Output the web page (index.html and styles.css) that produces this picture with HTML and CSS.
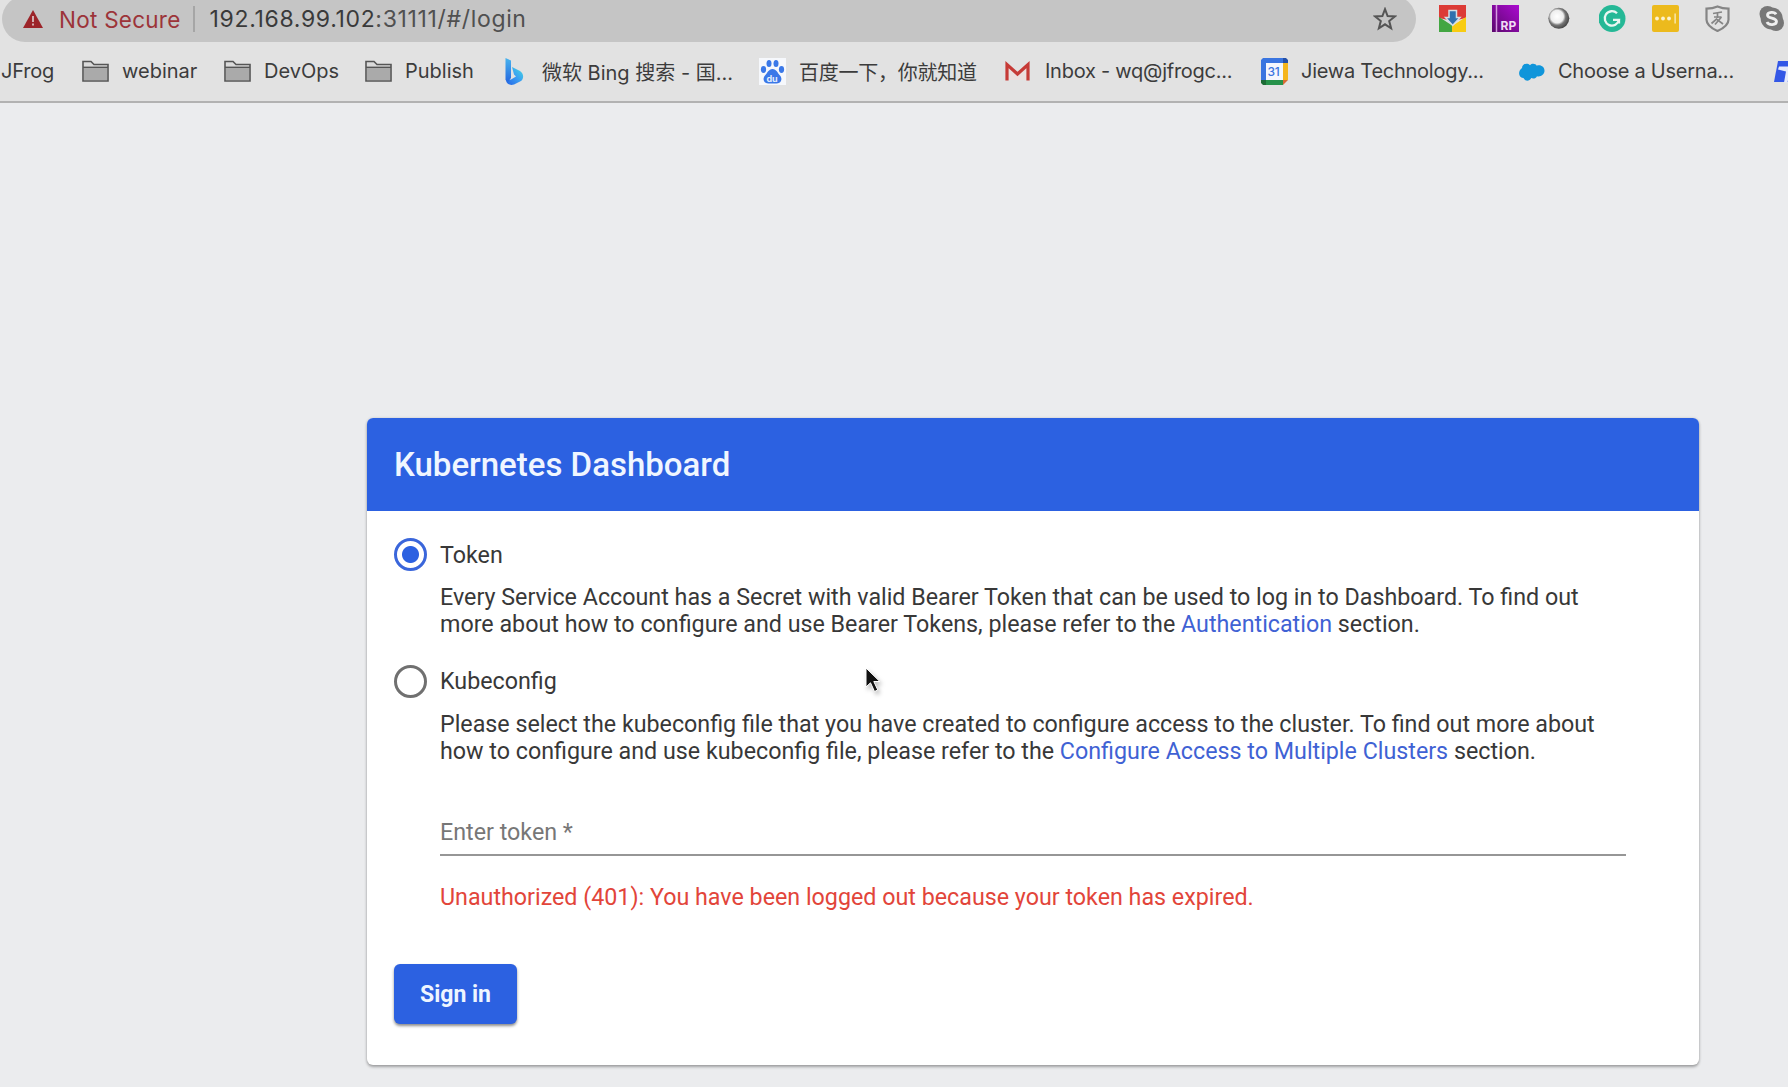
FILE: index.html
```html
<!DOCTYPE html>
<html lang="en">
<head>
<meta charset="utf-8">
<title>Kubernetes Dashboard</title>
<link rel="stylesheet" href="styles.css">
</head>
<body>
<header class="browser">
  <div class="toolbar">
    <div class="omnibox">
      <svg class="warn" viewBox="0 0 20 18"><path d="M10 0 20 18H0z" fill="#9c2429"/><path d="M10 6v6M10 13.5v2" stroke="#d9bfc0" stroke-width="1.8"/></svg>
      <span class="not-secure">Not Secure</span>
      <span class="divider"></span>
      <span class="url"><span class="host">192.168.99.102</span>:31111/#/login</span>
      <svg class="star" viewBox="0 0 24 24"><path d="M12 2.200l2.600 6.900 7.200.4-5.600 4.600 1.900 7.200L12 17.300l-6.100 4 1.900-7.200L2.200 9.500l7.200-.4z" fill="none" stroke="#555" stroke-width="2"/></svg>
    </div>
    <div class="extensions">
      <svg viewBox="0 0 27 27"><path d="M0 0h27v13L13.500 16 0 13z" fill="#dc3b36"/><path d="M0 12l14 9v6H0z" fill="#43a642"/><path d="M27 12L13 21v6h14z" fill="#f8cc12"/><path d="M10 5.500h7.500v7h3.500l-7.300 8L6.500 12.500H10z" fill="#3070ad" stroke="#d4dfe6" stroke-width="1.500"/></svg>
      <svg viewBox="0 0 27 27"><defs><linearGradient id="rp" x1="0" x2="1" y1="1" y2="0"><stop offset="0" stop-color="#5a086c"/><stop offset="1" stop-color="#ab0bd0"/></linearGradient></defs><path d="M0 0h27v27H0z" fill="url(#rp)"/><path d="M4.500 0v27" stroke="#d69be0" stroke-width="1.500"/><text x="8.500" y="24.500" class="rp" fill="#f0dcf4">RP</text></svg>
      <svg viewBox="0 0 27 27"><defs><radialGradient id="orb" cx=".42" cy=".42" r=".6"><stop offset="0" stop-color="#fff"/><stop offset=".5" stop-color="#eee"/><stop offset=".68" stop-color="#777"/><stop offset="1" stop-color="#444"/></radialGradient></defs><circle cx="12.800" cy="13.300" r="10.500" fill="url(#orb)"/></svg>
      <svg viewBox="0 0 27 27"><circle cx="13" cy="13.500" r="13.500" fill="#25b896"/><path d="M18 8.300A7.200 7.200 0 1 0 20 14.800H14M20 14.500v4" fill="none" stroke="#e9f6f2" stroke-width="2.300"/></svg>
      <svg viewBox="0 0 27 27"><rect width="27" height="27" rx="2" fill="#ecba1d"/><g fill="#fbf2d0"><circle cx="5" cy="13.500" r="1.900"/><circle cx="11" cy="13.500" r="1.900"/><circle cx="17" cy="13.500" r="1.900"/><path d="M22.500 8.500h1.200v10h-1.200z"/></g></svg>
      <svg viewBox="0 0 27 27"><path d="M12.500 1.500c4 1.800 7 2.200 11 2.200v11c0 5.500-6 9-11 11.300-5-2.300-11-5.800-11-11.300v-11c4 0 7-.4 11-2.200z" fill="none" stroke="#858585" stroke-width="2.200"/><path d="M8 8.500l9-1.500M9 12h7.500M12.500 8v5M6.500 18.500l5-4.500 6.500 5M16.500 12l-6.500 7.500" fill="none" stroke="#858585" stroke-width="1.700"/></svg>
      <svg viewBox="0 0 27 27"><circle cx="8.500" cy="9" r="8" fill="#777"/><circle cx="17" cy="18" r="8" fill="#777"/><circle cx="12.700" cy="13.500" r="11" fill="#777"/><path d="M17 9.300c-1.500-3-8.500-2.500-8.500.8 0 4 9 2.200 9 6.500 0 3.700-8 4-9.500.4" fill="none" stroke="#eee" stroke-width="2.800"/></svg>
    </div>
  </div>
  <nav class="bookmarks">
    <a class="bm first">JFrog</a>
    <a class="bm"><svg class="folder" viewBox="0 0 27 22"><path d="M1 21V1.500h8l3 3h14V21z" fill="#dadada" stroke="#555" stroke-width="1.600"/><path d="M2 8h23v12H2z" fill="#aaa"/><path d="M1 7.300h25" stroke="#555" stroke-width="1.400"/></svg><span>webinar</span></a>
    <a class="bm"><svg class="folder" viewBox="0 0 27 22"><path d="M1 21V1.500h8l3 3h14V21z" fill="#dadada" stroke="#555" stroke-width="1.600"/><path d="M2 8h23v12H2z" fill="#aaa"/><path d="M1 7.300h25" stroke="#555" stroke-width="1.400"/></svg><span>DevOps</span></a>
    <a class="bm"><svg class="folder" viewBox="0 0 27 22"><path d="M1 21V1.500h8l3 3h14V21z" fill="#dadada" stroke="#555" stroke-width="1.600"/><path d="M2 8h23v12H2z" fill="#aaa"/><path d="M1 7.300h25" stroke="#555" stroke-width="1.400"/></svg><span>Publish</span></a>
    <a class="bm"><svg class="fav" viewBox="0 0 27 27"><defs><linearGradient id="bs" x2="0" y2="1"><stop offset="0" stop-color="#48b4ee"/><stop offset="1" stop-color="#2468e0"/></linearGradient><linearGradient id="bb" x1="0" x2="1" y1="1" y2="0"><stop offset="0" stop-color="#2464e4"/><stop offset=".5" stop-color="#3a9cf2"/><stop offset="1" stop-color="#48dce0"/></linearGradient></defs><path d="M10 9l8 4c4 2.500 4 7.500 1 10L12 26.500c-5 1.500-8-1.500-8-4.500l5-.5 5-3-2-2z" fill="url(#bb)"/><path d="M3.500 0l5.500 2.500V20l-3 4-2.500-2z" fill="url(#bs)"/></svg><span>微软 Bing 搜索 - 国...</span></a>
    <a class="bm snug"><svg class="fav" viewBox="0 0 27 27"><path d="M0 0h27v27H0z" fill="#f6f8fc"/><g fill="#3a78e8"><ellipse cx="4.500" cy="11.500" rx="2.600" ry="3.400"/><ellipse cx="10" cy="5.500" rx="2.500" ry="3.600"/><ellipse cx="17" cy="5.500" rx="2.500" ry="3.600"/><ellipse cx="22.500" cy="11.500" rx="2.600" ry="3.400"/><path d="M13.500 11c4 0 5 4 7.500 6.500 3 3.500 1 8-3.500 8h-8c-4.500 0-6.500-4.500-3.500-8C8.500 15 9.500 11 13.500 11z"/></g><text x="7.500" y="23.500" class="du" fill="#e4edfd">du</text></svg><span>百度一下，你就知道</span></a>
    <a class="bm snug"><svg class="fav" viewBox="0 0 27 27"><path d="M3.500 8v14h18V8l-9 8z" fill="#ecdedd"/><path d="M2 22.500V6.500l10.500 9.500L23 6.500v16" fill="none" stroke="#c63a36" stroke-width="3.200"/></svg><span>Inbox - wq@jfrogc...</span></a>
    <a class="bm snug"><svg class="fav" viewBox="0 0 27 27"><path d="M5 5h17v17H5z" fill="#f4f7fd"/><path d="M2 0h20v5H5v17H0V2z" fill="#3a75e0"/><path d="M22 0h3l2 2v3h-5z" fill="#2450a8"/><path d="M22 5h5v17h-5z" fill="#f5b51c"/><path d="M5 22h17v5H5z" fill="#26924a"/><path d="M0 22h5v5H2l-2-2z" fill="#1c6b35"/><path d="M22 22h5l-5 5z" fill="#d96a35"/><text x="6.500" y="18" class="cal" fill="#3a75e0">31</text></svg><span>Jiewa Technology...</span></a>
    <a class="bm snug"><svg class="fav" viewBox="0 0 27 27"><path d="M4 8.500c0-4.500 5.500-5.500 8-2.800 2-2.200 5.500-1.700 6.700.5 4-1.500 7.800 1.200 7.800 5s-4 6.500-7.500 5.500c-1 2.300-4 2.800-5.800 1.800-1.700 3.500-6.200 3.500-7.700 0C1 19-1 12 4 8.500z" transform="translate(0 1.500)" fill="#1095da"/></svg><span>Choose a Userna...</span></a>
    <a class="bm"><svg class="fav" viewBox="0 0 27 27"><path d="M4 3h23v21H0z" fill="#3357e6"/><path d="M5 8.500h22v3H16l-2.500 13H10l2-11-8-2z" fill="#e6eafa"/></svg></a>
  </nav>
</header>
<main class="page">
  <section class="card">
    <h1 class="card-head">Kubernetes Dashboard</h1>
    <form class="card-body">
      <div class="option">
        <span class="radio checked"></span><label>Token</label>
        <p class="desc">Every Service Account has a Secret with valid Bearer Token that can be used to log in to Dashboard. To find out<br>more about how to configure and use Bearer Tokens, please refer to the <a class="link">Authentication</a> section.</p>
      </div>
      <div class="option">
        <span class="radio"></span><label>Kubeconfig</label>
        <p class="desc">Please select the kubeconfig file that you have created to configure access to the cluster. To find out more about<br>how to configure and use kubeconfig file, please refer to the <a class="link">Configure Access to Multiple Clusters</a> section.</p>
      </div>
      <div class="field">Enter token *</div>
      <p class="error">Unauthorized (401): You have been logged out because your token has expired.</p>
      <button class="signin" type="button">Sign in</button>
    </form>
  </section>
</main>
<svg class="cursor" viewBox="0 0 30 30"><path d="M1 1v19l4.500-4.200 4 8.700 3.300-1.500-4-8.500h6z" fill="#111" stroke="#fff" stroke-width="1"/></svg>
</body>
</html>
```
FILE: styles.css
```css
* { box-sizing: border-box; }
body {
  margin: 0;
  height: 1087px;
  overflow: hidden;
  background: #ebecee;
  color: #383838;
  font-family: Roboto, sans-serif;
  font-size: 23.27px;
}
svg { display: block; flex: none; }

/* Browser chrome */
.browser {
  height: 103px;
  background: #e2e2e2;
  border-bottom: 2px solid #b2b2b2;
  font-family: Inter, "Noto Sans CJK SC", sans-serif;
  overflow: hidden;
}
.toolbar { display: flex; height: 42px; padding-left: 2px; }
.omnibox {
  display: flex;
  align-items: center;
  width: 1414px;
  height: 46px;
  margin-top: -4px;
  padding: 0 19px 0 21px;
  border-radius: 23px;
  background: #c5c5c5;
  color: #505050;
}
.warn { width: 20px; height: 18px; }
.not-secure {
  margin-left: 16px;
  color: #9c3439;
  font-size: 22.5px;
  letter-spacing: .25px;
}
.divider { width: 2px; height: 26px; margin: 0 15px 0 12px; background: #a6a6a6; }
.url { font-size: 23px; letter-spacing: .66px; }
.host { color: #3a3a3a; }
.star { width: 24px; height: 24px; margin-left: auto; }
.extensions { display: flex; gap: 26.3px; padding: 5px 0 0 23px; }
.extensions svg { width: 27px; height: 27px; }
.rp { font: 700 12px Inter, sans-serif; }
.du { font: 700 9px Inter, sans-serif; }
.cal { font: 500 12px Inter, sans-serif; }

.bookmarks {
  display: grid;
  grid-template-columns: 82px 142px 141px 137px 257px 246px 256px 257px 256px 30px;
  height: 58px;
  color: #3c3c3c;
  font-size: 20px;
}
.bm { display: flex; align-items: center; gap: 13px; white-space: nowrap; }
.first { padding-left: 1px; letter-spacing: -.2px; }
.snug { letter-spacing: -.25px; }
.folder { width: 27px; height: 22px; }
.fav { width: 27px; height: 27px; }

/* Login card */
.page { padding: 315px 0 0 367px; }
.card {
  width: 1332px;
  height: 647px;
  border-radius: 6px;
  background: #fff;
  box-shadow: 0 2px 3px rgba(0, 0, 0, .3), 0 0 3px rgba(0, 0, 0, .12);
  overflow: hidden;
}
.card-head {
  display: flex;
  align-items: center;
  height: 93px;
  margin: 0;
  padding-left: 27px;
  background: #2c61e1;
  color: #f0f6ff;
  font-size: 33px;
  font-weight: 500;
}
.card-body { padding: 27px 73px 0 27px; }
.option {
  display: grid;
  grid-template: 33px auto / 33px 1fr;
  column-gap: 13px;
  align-items: center;
  align-content: start;
  height: 126.5px;
}
.radio {
  width: 33px;
  height: 33px;
  border: 3px solid #707070;
  border-radius: 50%;
}
.checked {
  border-color: #3a66db;
  background: radial-gradient(circle, #2c61e1 8px, transparent 9px);
}
.desc { grid-column: 2; margin: 13px 0 0; line-height: 27px; white-space: nowrap; }
.link { color: #3f62d4; }
.field {
  height: 65px;
  margin-left: 46px;
  padding-top: 28px;
  border-bottom: 2px solid #969696;
  color: #777;
  line-height: 27px;
}
.error { margin: 28px 0 0 46px; color: #e2453a; line-height: 27px; }
.signin {
  display: block;
  width: 123px;
  height: 60px;
  margin-top: 53px;
  padding: 0;
  border: 0;
  border-radius: 6px;
  background: #2c61e1;
  color: #eef5ff;
  font: 700 23px Roboto, sans-serif;
  box-shadow: 0 2px 3px rgba(0, 0, 0, .45);
}
.cursor {
  position: absolute;
  left: 865px;
  top: 667px;
  width: 30px;
  height: 30px;
  filter: drop-shadow(2px 3px 2px rgba(0, 0, 0, .25));
}
```
